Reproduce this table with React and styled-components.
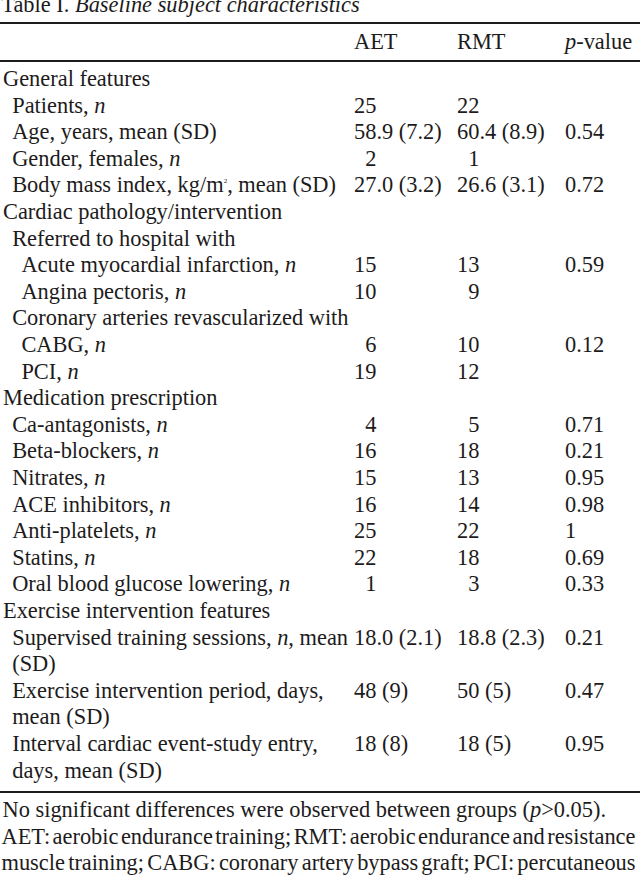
import React from 'react';
import styled, { createGlobalStyle } from 'styled-components';

const GlobalStyle = createGlobalStyle`
  html, body {
    margin: 0;
    padding: 0;
    background: #ffffff;
  }
  body {
    font-family: "Liberation Serif", "Times New Roman", serif;
    font-size: 22.4px;
    line-height: 26.6px;
    color: #1d1b1b;
    overflow: hidden;
  }
`;

const COLS = '354px 103px 108px 1fr';

const Page = styled.div`
  width: 640px;
  overflow: hidden;
`;

const Title = styled.div`
  margin: -8px 0 3.4px;
  padding-left: 1.3px;
  white-space: nowrap;
`;

const Table = styled.div`
  border-top: 2px solid #1d1b1b;
  border-bottom: 2px solid #1d1b1b;
`;

const HeaderRow = styled.div`
  display: grid;
  grid-template-columns: ${COLS};
  padding: 5.14px 0 4.26px;
  border-bottom: 2px solid #1d1b1b;
`;

const Body = styled.div`
  padding: 4.14px 0 6.66px;
`;

const Row = styled.div`
  display: grid;
  grid-template-columns: ${COLS};
  align-items: start;
`;

const Label = styled.div`
  padding-left: ${(p) => 3 + p.$level * 9.2}px;
  white-space: nowrap;
`;

const Value = styled.div`
  white-space: nowrap;
  padding-left: ${(p) => (p.$pad ? '0.5em' : '0')};
`;

const I = styled.i`
  font-style: italic;
`;

const Sup = styled.sup`
  font-size: 7px;
  line-height: 0;
  vertical-align: 9px;
`;

const Footnote = styled.div`
  padding: 4.44px 4.5px 0 1.5px;
`;

const FootLine = styled.div`
  white-space: nowrap;
  padding-left: ${(p) => p.$indent || 0}px;
  ${(p) =>
    p.$justify
      ? `
    white-space: normal;
    text-align: justify;
    text-align-last: justify;
    word-spacing: -3.4px;
  `
      : ''}
`;

const n = <I>n</I>;

const rows = [
  { level: 0, label: ['General features'] },
  { level: 1, label: [<>Patients, {n}</>], v: ['25', '22', ''] },
  { level: 1, label: ['Age, years, mean (SD)'], v: ['58.9 (7.2)', '60.4 (8.9)', '0.54'] },
  { level: 1, label: [<>Gender, females, {n}</>], v: ['2', '1', ''], pad: [1, 1, 0] },
  {
    level: 1,
    label: [<>Body mass index, kg/m<Sup>2</Sup>, mean (SD)</>],
    v: ['27.0 (3.2)', '26.6 (3.1)', '0.72'],
  },
  { level: 0, label: ['Cardiac pathology/intervention'] },
  { level: 1, label: ['Referred to hospital with'] },
  { level: 2, label: [<>Acute myocardial infarction, {n}</>], v: ['15', '13', '0.59'] },
  { level: 2, label: [<>Angina pectoris, {n}</>], v: ['10', '9', ''], pad: [0, 1, 0] },
  { level: 1, label: ['Coronary arteries revascularized with'] },
  { level: 2, label: [<>CABG, {n}</>], v: ['6', '10', '0.12'], pad: [1, 0, 0] },
  { level: 2, label: [<>PCI, {n}</>], v: ['19', '12', ''] },
  { level: 0, label: ['Medication prescription'] },
  { level: 1, label: [<>Ca-antagonists, {n}</>], v: ['4', '5', '0.71'], pad: [1, 1, 0] },
  { level: 1, label: [<>Beta-blockers, {n}</>], v: ['16', '18', '0.21'] },
  { level: 1, label: [<>Nitrates, {n}</>], v: ['15', '13', '0.95'] },
  { level: 1, label: [<>ACE inhibitors, {n}</>], v: ['16', '14', '0.98'] },
  { level: 1, label: [<>Anti-platelets, {n}</>], v: ['25', '22', '1'] },
  { level: 1, label: [<>Statins, {n}</>], v: ['22', '18', '0.69'] },
  {
    level: 1,
    label: [<>Oral blood glucose lowering, {n}</>],
    v: ['1', '3', '0.33'],
    pad: [1, 1, 0],
  },
  { level: 0, label: ['Exercise intervention features'] },
  {
    level: 1,
    label: [<>Supervised training sessions, {n}, mean</>, '(SD)'],
    v: ['18.0 (2.1)', '18.8 (2.3)', '0.21'],
  },
  {
    level: 1,
    label: ['Exercise intervention period, days,', 'mean (SD)'],
    v: ['48 (9)', '50 (5)', '0.47'],
  },
  {
    level: 1,
    label: ['Interval cardiac event-study entry,', 'days, mean (SD)'],
    v: ['18 (8)', '18 (5)', '0.95'],
  },
];

export default function App() {
  return (
    <Page>
      <GlobalStyle />
      <Title>
        Table I. <I>Baseline subject characteristics</I>
      </Title>
      <Table>
        <HeaderRow>
          <Label $level={0} />
          <Value>AET</Value>
          <Value>RMT</Value>
          <Value>
            <I>p</I>-value
          </Value>
        </HeaderRow>
        <Body>
          {rows.map((r, i) => (
            <Row key={i}>
              <Label $level={r.level}>
                {r.label.map((l, j) => (
                  <div key={j}>{l}</div>
                ))}
              </Label>
              {(r.v || ['', '', '']).map((val, k) => (
                <Value key={k} $pad={r.pad ? r.pad[k] : 0}>
                  {val}
                </Value>
              ))}
            </Row>
          ))}
        </Body>
      </Table>
      <Footnote>
        <FootLine $indent={1}>
          No significant differences were observed between groups (<I>p</I>&gt;0.05).
        </FootLine>
        <FootLine $justify>
          AET: aerobic endurance training; RMT: aerobic endurance and resistance
        </FootLine>
        <FootLine $justify>
          muscle training; CABG: coronary artery bypass graft; PCI: percutaneous
        </FootLine>
      </Footnote>
    </Page>
  );
}
